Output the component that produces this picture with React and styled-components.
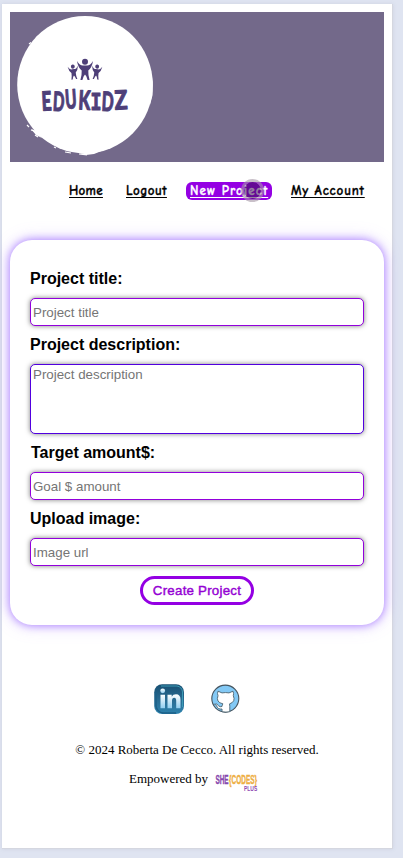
import React from "react";
import styled, { createGlobalStyle, css } from "styled-components";

const GlobalStyle = createGlobalStyle`
  * { box-sizing: border-box; }
  body { margin: 0; background: #dfe4f1; overflow: hidden; }
`;

const Backdrop = styled.div`
  height: 858px;
  padding: 4px 0 0 2px;
  background: #dfe4f1;
`;

const Page = styled.div`
  width: 391px;
  height: 845px;
  padding: 8px 8px 0;
  background: #fff;
  border-right: 1px solid #d5d7e0;
  border-bottom: 1px solid #d5d7e0;
  box-shadow: 0 0 4px rgba(120, 125, 150, 0.16);
  font-family: "Liberation Sans", Arial, sans-serif;
`;

const Header = styled.header`
  height: 150px;
  background: #73698a;
`;

const LogoArt = styled.svg`
  display: block;
`;

const Nav = styled.nav`
  display: flex;
  height: 78px;
  padding: 20px 0 0 59px;
  font-family: "Comic Sans MS", "Comic Neue", "Open Sans", sans-serif;
  font-size: 13px;
  font-weight: 700;
  line-height: 18px;
`;

const NavLink = styled.a`
  position: relative;
  height: 18px;
  width: ${(p) => p.$width}px;
  margin-right: ${(p) => p.$gap || 0}px;
  letter-spacing: ${(p) => p.$spacing || 0}px;
  color: #000;
  -webkit-text-stroke: 0.3px currentColor;
  text-decoration: underline;
  text-decoration-skip-ink: none;
  text-decoration-thickness: 1px;
  text-underline-offset: 2px;
  white-space: nowrap;
  ${(p) =>
    p.$active &&
    css`
      padding-left: 4px;
      color: #fff;
      background: #9400e3;
      border-radius: 6px;
    `}
`;

const Cursor = styled.span`
  position: absolute;
  left: 55px;
  top: -3px;
  width: 23px;
  height: 23px;
  border: 3px solid rgba(165, 150, 165, 0.6);
  border-radius: 50%;
  background: rgba(55, 20, 75, 0.52);
  background-clip: padding-box;
`;

const Card = styled.form`
  height: 385px;
  padding: 29px 20px 0;
  background: #fff;
  border-radius: 22px;
  box-shadow: 0 0 10px rgba(135, 75, 255, 0.75),
    0 0 20px rgba(160, 110, 255, 0.2);
`;

const Field = styled.label`
  display: block;
  margin-bottom: 9px;
`;

const FieldLabel = styled.span`
  display: block;
  height: 19px;
  margin-bottom: 10px;
  padding-left: ${(p) => p.$indent || 0}px;
  font-size: 16px;
  line-height: 19px;
  font-weight: 700;
`;

const control = css`
  display: block;
  width: 334px;
  margin: 0;
  padding: 1px 2px;
  border-radius: 5px;
  background: #fff;
  box-shadow: 0 0 5px rgba(0, 0, 0, 0.5);
  font-family: "Liberation Sans", Arial, sans-serif;
  font-size: 13.33px;
  line-height: 16px;
  outline: none;
  &::placeholder {
    color: #757575;
  }
`;

const Input = styled.input`
  ${control}
  height: 28px;
  border: 1px solid #9200dc;
`;

const TextArea = styled.textarea`
  ${control}
  height: 70px;
  padding-top: 2px;
  border: 1px solid #5100df;
  resize: none;
`;

const CreateButton = styled.button`
  display: block;
  width: 114px;
  height: 29px;
  margin: 10px 0 0 110px;
  padding: 0;
  border: 3px solid #9400e3;
  border-radius: 15px;
  background: #fff;
  color: #9400d3;
  font-family: "Liberation Sans", Arial, sans-serif;
  font-size: 13.33px;
  letter-spacing: 0.22px;
  -webkit-text-stroke: 0.4px #9400d3;
`;

const Footer = styled.footer`
  display: flex;
  flex-direction: column;
  align-items: center;
  padding-top: 59px;
  font-family: "Liberation Serif", "Times New Roman", serif;
  font-size: 13px;
  line-height: 15px;
`;

const Socials = styled.div`
  display: flex;
  gap: 26px;
  height: 32px;
  margin-bottom: 26px;
`;

const Copyright = styled.p`
  margin: 0 0 14px;
`;

const Credit = styled.div`
  display: flex;
  gap: 7px;
  padding-right: 2px;
`;

const LETTERS = [
  { letter: "E", x: 41.5, y: 110.5, width: 10, turn: -3 },
  { letter: "D", x: 53, y: 111, width: 11.5, turn: 3 },
  { letter: "U", x: 65, y: 108.5, width: 11.5, turn: -4 },
  { letter: "K", x: 78.5, y: 109.5, width: 12, turn: 3 },
  { letter: "I", x: 90.5, y: 109.5, width: 11, turn: 0, serif: true },
  { letter: "D", x: 101.8, y: 111, width: 12, turn: 3 },
  { letter: "Z", x: 114.5, y: 109.5, width: 13, turn: -3 },
];

function Child({ transform }) {
  return (
    <g transform={transform}>
      <circle cx="0" cy="-7.8" r="3" />
      <path d="M-8-8.5Q-5-3.5-1.5-4H1.5Q5-3.5 8-8.5Q7-2 3.3 1Q3 5 4.6 10.5L2.6 10.5Q1.5 6 0 5Q-1.5 6-2.6 10.5L-4.6 10.5Q-3 5-3.3 1Q-7-2-8-8.5Z" />
    </g>
  );
}

function EdukidzLogo() {
  return (
    <LogoArt width="160" height="150" viewBox="10 12 160 150">
      <ellipse cx="85" cy="84.7" rx="67.8" ry="68.7" fill="#fff" />
      <path
        fill="#fff"
        d="M33 46L37 43L45 34L36 44ZM148 62L151.5 75L152.8 82L152.6 95L150 105ZM104 150L94 154L86 155L79 153.5L90 152.5ZM31 129L36 135L42 138L37 131Z"
      />
      <path
        fill="none"
        stroke="#fff"
        strokeWidth="1.2"
        d="M29 44l2-1.5M36 38l2-2M27 125l2 2M31 130l3 1M35 135l3 2M54 147l2 1M65 152l6 1M79 154l8 .8"
      />
      <g fill="#4e3f78">
        <Child transform="translate(85 69.5)" />
        <Child transform="translate(73.5 72) rotate(-7) scale(.65 .7)" />
        <Child transform="translate(96.5 72) rotate(7) scale(.65 .7)" />
      </g>
      <g
        fill="#4e3f78"
        stroke="#4e3f78"
        strokeWidth="1"
        strokeLinejoin="round"
        fontSize="26.5"
        fontWeight="900"
      >
        {LETTERS.map(({ letter, x, y, width, turn, serif }) => (
          <text
            key={x}
            x={x}
            y={y}
            fontFamily={serif ? "'Liberation Mono', monospace" : "Lato, sans-serif"}
            textLength={width}
            lengthAdjust="spacingAndGlyphs"
            transform={`rotate(${turn} ${x + width / 2} ${y - 9})`}
          >
            {letter}
          </text>
        ))}
      </g>
    </LogoArt>
  );
}

function LinkedinIcon() {
  return (
    <svg width="31" height="31" viewBox="0 0 31 31">
      <defs>
        <linearGradient id="tile" x2="0" y2="1">
          <stop stopColor="#174f72" />
          <stop offset=".5" stopColor="#286a91" />
          <stop offset="1" stopColor="#2e83ae" />
        </linearGradient>
        <linearGradient id="letters" x2="0" y2="1">
          <stop stopColor="#fff" />
          <stop offset="1" stopColor="#91cef0" />
        </linearGradient>
      </defs>
      <rect x=".2" y=".2" width="29.8" height="29.8" rx="8" fill="url(#tile)" />
      <path d="M7 2H23Q28 3 28.5 8V23" fill="none" stroke="#3d9bb5" strokeWidth="1" />
      <path d="M2 8V22Q3 28 9 29H22" fill="none" stroke="#1d6088" strokeWidth="1.5" />
      <g fill="url(#letters)">
        <circle cx="8.7" cy="6.8" r="2.4" />
        <path d="M6.5 10.8H11V24.3H6.5ZM13.5 10.8H17.7V12.7Q19 10.3 22 10.3Q26.5 10.3 26.5 15.8V24.3H22.2V16.8Q22.2 13.8 20.2 13.8Q18 13.8 18 16.8V24.3H13.5Z" />
      </g>
    </svg>
  );
}

function GithubIcon() {
  return (
    <svg width="29" height="31" viewBox="0 0 29 31">
      <circle cx="14.3" cy="14.6" r="13.5" fill="#83c9f5" stroke="#46545e" strokeWidth="1.1" />
      <path
        d="M7 7.2L11 8.9Q14.5 8.2 18 8.9L22 7.2Q23 9.7 22.3 11.7Q25 17.7 18.5 19.9Q18.8 20.7 18.8 22.7V27.7Q15 28.5 11 27.7V25Q7 25.7 5.5 21.7Q4.5 20.4 3.5 20.2Q6 19.2 7.5 21.7Q9 23.4 11 22.5Q11 20.7 12 19.9Q4.5 18.2 7 11.7Q6 9.7 7 7.2Z"
        fill="#fff"
        stroke="#4b6370"
        strokeWidth=".9"
      />
    </svg>
  );
}

function SheCodesLogo() {
  return (
    <svg width="48" height="26" viewBox="0 0 48 26">
      <g fontFamily="'Liberation Sans', sans-serif" fontSize="13" fontWeight="700">
        <text transform="translate(.4 13) scale(.49 1)" fill="#8748ae" stroke="#8748ae" strokeWidth=".4">SHE</text>
        <text transform="translate(14 13) scale(.5 1)" fill="#eeae42" stroke="#eeae42" strokeWidth=".4">{"{CODES}"}</text>
        <text transform="translate(29 20.2) scale(.62 1)" fontSize="8" fill="#8f4bb3">PLUS</text>
      </g>
    </svg>
  );
}

export default function App() {
  return (
    <Backdrop>
      <GlobalStyle />
      <Page>
        <Header>
          <EdukidzLogo />
        </Header>
        <Nav>
          <NavLink $width={34} $gap={23} $spacing={0.3}>Home</NavLink>
          <NavLink $width={41} $gap={19} $spacing={0.45}>Logout</NavLink>
          <NavLink $active $width={86} $gap={19} $spacing={1.05}>
            New Project
            <Cursor />
          </NavLink>
          <NavLink $width={74} $spacing={0.85}>My Account</NavLink>
        </Nav>
        <Card>
          <Field>
            <FieldLabel>Project title:</FieldLabel>
            <Input placeholder="Project title" />
          </Field>
          <Field>
            <FieldLabel>Project description:</FieldLabel>
            <TextArea placeholder="Project description" />
          </Field>
          <Field>
            <FieldLabel $indent={1}>Target amount$:</FieldLabel>
            <Input placeholder="Goal $ amount" />
          </Field>
          <Field>
            <FieldLabel>Upload image:</FieldLabel>
            <Input placeholder="Image url" />
          </Field>
          <CreateButton type="button">Create Project</CreateButton>
        </Card>
        <Footer>
          <Socials>
            <LinkedinIcon />
            <GithubIcon />
          </Socials>
          <Copyright>© 2024 Roberta De Cecco. All rights reserved.</Copyright>
          <Credit>
            <span>Empowered by</span>
            <SheCodesLogo />
          </Credit>
        </Footer>
      </Page>
    </Backdrop>
  );
}
